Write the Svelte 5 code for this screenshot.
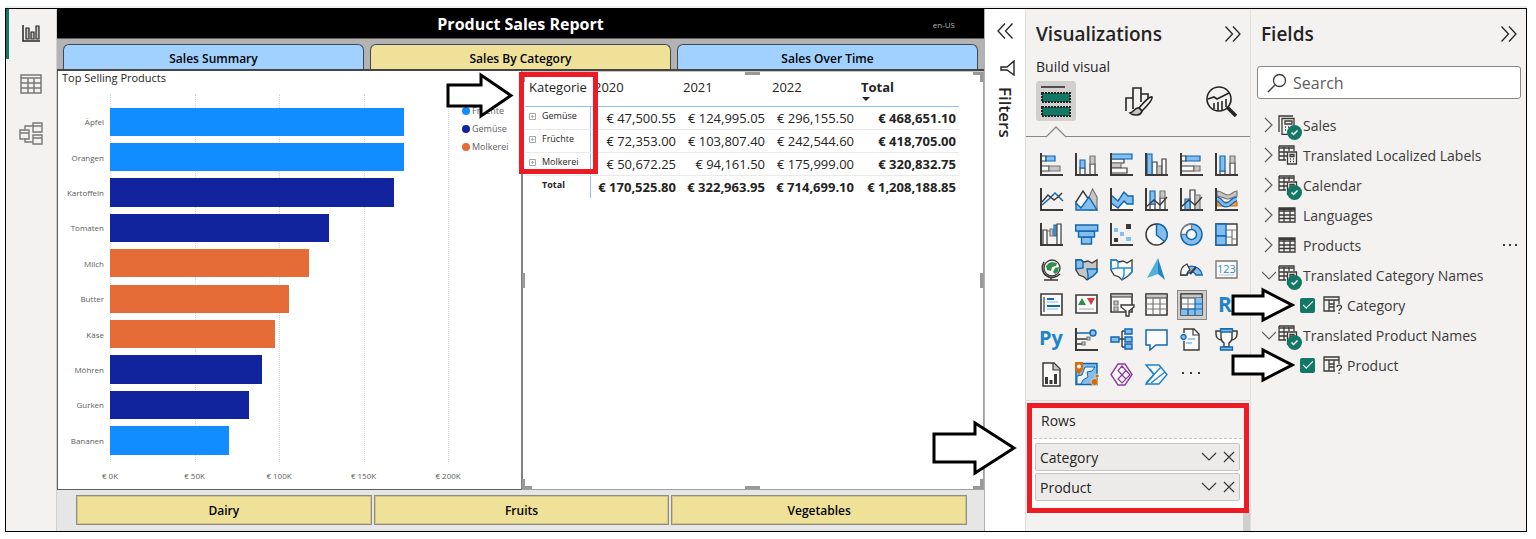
<script>
  const DARK = '#3b3a39';
  const BLUE = '#1167b1';
  const SKY = '#83beec';
  const WHITE = '#fafafa';
  const GREY = '#c8c6c4';
  const MID = '#797775';
  const ORANGE = '#d86c0a';
  const GREEN = '#309048';
  const PURPLE = '#8d3a9c';

  const R = (x, y, w, h) => `M${x} ${y}h${w}v${h}h${-w}z`;
  const axis = ['M1 0V22H23', 'none', DARK, 2];

  // Every shape is [path, fill, stroke, stroke width]; text is [string, x, y, size].
  const visuals = [
    { name: 'Stacked bar chart', shapes: [[R(1, 3, 5, 5), WHITE, DARK], [R(1, 13, 8, 5), WHITE, DARK], [R(9, 13, 11, 5), GREY, MID], [R(6, 3, 9, 5), SKY, BLUE], axis] },
    { name: 'Stacked column chart', shapes: [[R(5, 15, 5, 7), WHITE, DARK], [R(5, 7, 5, 8), SKY, BLUE], [R(15, 11, 5, 11), WHITE, DARK], [R(15, 3, 5, 8), GREY, MID], axis] },
    { name: 'Clustered bar chart', shapes: [[R(1, 6, 13, 4), WHITE, DARK], [R(1, 10, 10, 5), GREY, MID], [R(1, 15, 16, 5), WHITE, DARK], [R(1, 1, 21, 5), SKY, BLUE], axis] },
    { name: 'Clustered column chart', shapes: [[R(7, 9, 5, 13), WHITE, DARK], [R(12, 13, 5, 9), GREY, MID], [R(17, 6, 4, 16), WHITE, DARK], [R(2, 1, 5, 21), SKY, BLUE], axis] },
    { name: '100% stacked bar chart', shapes: [[R(1, 3, 5, 5), WHITE, DARK], [R(1, 13, 13, 5), WHITE, DARK], [R(14, 13, 6, 5), GREY, MID], [R(6, 3, 14, 5), SKY, BLUE], axis] },
    { name: '100% stacked column chart', shapes: [[R(5, 18, 5, 4), WHITE, DARK], [R(5, 3, 5, 15), SKY, BLUE], [R(15, 10, 5, 12), WHITE, DARK], [R(15, 3, 5, 7), GREY, MID], axis] },
    { name: 'Line chart', shapes: [['M2 17L9 11L15 5L19 9L23 13', 'none', BLUE, 1.5], ['M2 14L8 7L14 12L18 9L22 5', 'none', DARK, 1.5], axis] },
    { name: 'Area chart', shapes: [['M12 14L17.5 1L22 9V22H14z', GREY, MID], ['M1 14L8 3L14 12L7 21L1 16z', WHITE, DARK, 1.4], ['M1 15L6 20L14 9L22 22H1z', SKY, BLUE, 1.4]] },
    { name: 'Stacked area chart', shapes: [['M1 15L8 20L14 13L17 16H23V21H1z', WHITE, 'none'], ['M1 7L8 13L14 4L18 8H23V16H17L14 13L8 20L1 15z', SKY, BLUE, 1.4], axis] },
    { name: 'Line and stacked column chart', shapes: [[R(5, 16, 5, 6), WHITE, DARK], [R(5, 3, 5, 13), SKY, BLUE], [R(15, 10, 5, 12), WHITE, DARK], [R(15, 3, 5, 7), GREY, MID], ['M1 19L9 12L15 17L22 9', 'none', DARK, 1.4], axis] },
    { name: 'Line and clustered column chart', shapes: [[R(10, 2, 5, 20), WHITE, DARK], [R(15, 7, 5, 15), GREY, MID], [R(5, 11, 5, 11), SKY, BLUE], ['M1 19L9 12L15 17L22 9', 'none', DARK, 1.4], axis] },
    { name: 'Ribbon chart', shapes: [[R(2, 14, 20, 4), '#f0a04b', ORANGE], ['M2 3C7 3 9 7 13 7S18 3 22 3V8C18 8 17 11 13 11S7 8 2 8z', GREY, MID], ['M2 11C6 11 6 17 11 17S17 11 22 11', 'none', BLUE, 5], ['M2 11C6 11 6 17 11 17S17 11 22 11', 'none', SKY, 2.5], axis] },
    { name: 'Waterfall chart', shapes: [[R(3, 7, 4, 15), WHITE, DARK], ['M7 8H10V6H13V13H10V8', GREY, MID], [R(14, 2, 2, 11), SKY, BLUE], [R(17, 1, 4, 21), WHITE, DARK], axis] },
    { name: 'Funnel', shapes: [[R(6.5, 14, 10, 7), SKY, BLUE, 1.4], [R(3.5, 8, 16, 6), SKY, BLUE, 1.4], [R(0.7, 2, 22, 6), SKY, BLUE, 1.4]] },
    { name: 'Scatter chart', shapes: [[R(4, 5, 4, 4), SKY, 'none'], [R(16, 1, 5, 5), DARK, 'none'], [R(10, 9, 4, 4), SKY, 'none'], [R(4, 15, 4, 4), DARK, 'none'], [R(16, 14, 5, 4), SKY, 'none'], axis] },
    { name: 'Pie chart', shapes: [['M11.500 1a10.500 10.500 0 1 0 0 21a10.500 10.500 0 1 0 0-21z', WHITE, DARK, 1.5], ['M11.500 1a10.500 10.500 0 0 1 8 17.500L11.500 12z', SKY, BLUE, 1.5]] },
    { name: 'Donut chart', shapes: [['M11.500 1a10.500 10.500 0 1 0 0 21a10.500 10.500 0 1 0 0-21z', SKY, BLUE, 1.5], ['M11.500 1A10.500 10.500 0 0 0 1 11.500H6.500A5 5 0 0 1 11.500 6.500z', WHITE, MID, 1.3], ['M11.500 6.500a5 5 0 1 0 0 10a5 5 0 1 0 0-10z', WHITE, BLUE, 1.5]] },
    { name: 'Treemap', shapes: [[R(1, 1, 21, 21), WHITE, DARK, 1.4], ['M11 7H22M17 7V22M11 14H17M17 16H22', 'none', MID, 1.2], [R(1, 1, 10, 12), SKY, BLUE, 1.4], [R(1, 13, 10, 9), SKY, BLUE, 1.4]] },
    { name: 'Map', shapes: [['M12 2a8 8 0 1 0 0 16a8 8 0 1 0 0-16z', WHITE, DARK, 1.3], ['M12 4l5 1l-1 3l-4 1l-1 4l-4-1l-1-4l3-3zM15 10l4-1l-1 5l-3 2l-2-2z', GREEN, 'none'], ['M4 4C1 9 2 15 7 18C11 21 17 19 20 16M11 19V22M4 22H18', 'none', DARK, 1.6]] },
    { name: 'Filled map', shapes: [['M1 2H6L9 4L13 3L17 5L22 2V14L18 18L12 22L9 19L4 17L1 12z', GREY, DARK, 1.3], ['M1 2H6L8 4V10L1 11zM12 11H22V14L18 18L13 21V17z', SKY, BLUE, 1.4]] },
    { name: 'Shape map', shapes: [['M1 2H6L9 4L13 3L17 5L22 2V14L18 18L12 22L9 19L4 17L1 12z', WHITE, DARK, 1.3], ['M1 2H6L8 4V10L1 11zM8 10H22M14 10V17L12 22M22 10V14L18 18', 'none', '#1e90d8', 1.4]] },
    { name: 'Azure map', shapes: [['M13 0L2 20L13 16z', '#4fb0dc', 'none'], ['M13 0L20 22L13 16z', '#2187c4', 'none']] },
    { name: 'Gauge', shapes: [['M0.700 17A11 11 0 0 1 22.300 17H16A5 5 0 0 0 7 17z', SKY, BLUE, 1.3], ['M0.700 17A11 11 0 0 1 7 6L10 12A5 5 0 0 0 7 17z', WHITE, DARK, 1.3], ['M10 16L16 9', 'none', DARK, 2.2]] },
    { name: 'Card', shapes: [[R(1, 3, 21, 17), WHITE, MID, 1.4], ['M4 17H19', 'none', GREY, 1]], text: ['123', 2, 15, 11], color: '#2f8fd0', weight: 400 },
    { name: 'Multi-row card', shapes: [[R(1, 1, 21, 21), WHITE, DARK, 1.6], ['M4 4V19', 'none', DARK, 1.2], ['M7 6H14M7 13H20', 'none', BLUE, 2], ['M7 9H18M7 16H18', 'none', SKY, 1]] },
    { name: 'KPI', shapes: [[R(1, 2, 21, 18), WHITE, DARK, 1.6], ['M7 5L11 12H3z', GREEN, 'none'], ['M12 5H20L16 12z', '#d8383a', 'none'], ['M4 16H19', 'none', GREY, 1.5]] },
    { name: 'Slicer', shapes: [[R(1, 1, 21, 18), WHITE, DARK, 1.6], [R(1, 1, 21, 3), GREY, DARK, 1], [R(4, 8, 4, 4), GREY, MID], [R(4, 14, 4, 4), GREY, MID], ['M11 12H24V14L19 18V23H16V18L11 14z', WHITE, DARK, 1.4]] },
    { name: 'Table', shapes: [[R(1, 1, 21, 21), WHITE, DARK, 1.6], [R(1, 1, 21, 4), GREY, DARK, 1], ['M8 5V22M15 5V22M1 11H22M1 16H22', 'none', MID, 1.2]] },
    { name: 'Matrix', selected: true, shapes: [[R(1, 1, 21, 21), WHITE, DARK, 1.6], [R(1, 1, 21, 4), GREY, DARK, 1], ['M15 5H22V22H1V16H15z', SKY, 'none'], ['M8 5V22M1 11H15M1 16H15', 'none', MID, 1], ['M15 5V22M15 11H22M1 16H22M8 16V22', 'none', BLUE, 1.2]] },
    { name: 'R script visual', shapes: [], text: ['R', 3, 19, 21], color: '#2284c8', weight: 700 },
    { name: 'Python visual', shapes: [], text: ['Py', -1, 17, 20], color: '#2284c8', weight: 700 },
    { name: 'Key influencers', shapes: [['M1 5H16', 'none', BLUE, 1.5], ['M1 11H12M1 16H7', 'none', DARK, 1.3], [R(12, 9, 3, 3), GREY, MID], [R(7, 14, 3, 3), GREY, MID], ['M18 2a3 3 0 1 0 0 6a3 3 0 1 0 0-6z', SKY, BLUE, 1.4], axis] },
    { name: 'Decomposition tree', shapes: [['M8 11H15M12 3V19M12 3H15M12 19H15', 'none', DARK, 1.4], [R(1, 9, 8, 5), SKY, BLUE, 1.4], [R(15, 1, 7, 5), SKY, BLUE, 1.4], [R(15, 9, 7, 5), SKY, BLUE, 1.4], [R(15, 16, 7, 5), SKY, BLUE, 1.4]] },
    { name: 'Q&A', shapes: [['M1 2H22V17H11L5 22V17H1z', WHITE, BLUE, 1.5]] },
    { name: 'Smart narrative', shapes: [['M4 5V1H14L19 6V22H4V13', WHITE, DARK, 1.4], ['M13 1V7H19', 'none', DARK, 1.2], ['M8 11H15M6 15H12', 'none', SKY, 1.5], ['M3.500 6.500a2.500 2.500 0 1 0 .01 0z', SKY, BLUE, 1.4]] },
    { name: 'Goals', shapes: [['M6 3H1V6C1 10 4 12 7 12M17 3H22V6C22 10 19 12 16 12', 'none', DARK, 1.5], ['M6 1H17V10C17 13 14 15 14 15V19H9V15C9 15 6 13 6 10z', WHITE, DARK, 1.4], [R(5.5, 1, 12, 3), SKY, BLUE, 1.3], [R(5.5, 19, 12, 3), SKY, BLUE, 1.3]] },
    { name: 'Paginated report', shapes: [['M3 0H14L20 6V23H3z', WHITE, DARK, 1.5], ['M13 0V7H20', GREY, DARK, 1.2], [R(5, 14, 3, 7), DARK, 'none'], [R(9.5, 17, 3, 4), DARK, 'none'], [R(14, 11, 3, 10), DARK, 'none']] },
    { name: 'ArcGIS map', shapes: [[R(1, 0.5, 21, 21), SKY, BLUE, 1.5], ['M10 4H20L17 8L12 9L13 14L8 17L6 21H2V13L7 12z', '#f3f2f1', BLUE, 1], ['M14 10L20 8V12L15 15L13 20L9 21L10 18L14 15z', SKY, 'none'], ['M0-1H8V6L4 12L0 6z', ORANGE, 'none'], ['M4 1.500a2 2 0 1 0 .01 0z', WHITE, 'none'], ['M19.500 15.500a3.500 3.500 0 1 0 .01 0zM22 11a2 2 0 1 0 .01 0z', ORANGE, WHITE, 0.6]] },
    { name: 'Power Apps', shapes: [['M8 1H15L22 11.500L15 22H8L1 11.500z', WHITE, PURPLE, 1.4], ['M12 3L16 7.500L12 12L8 7.500zM12 12L16 16L12 20L8 16zM16 7.500L20 12L16 16L12 12zM8 7.500L12 12L8 16', 'none', PURPLE, 1.2]] },
    { name: 'Power Automate', shapes: [['M1 2H14L22 11.500L14 21H1L9 11.500z', WHITE, '#1a82cc', 1.4], ['M1 20L16 4M6 20L20 9M5 6L9 11.500', 'none', '#1a82cc', 1.3]] },
    { name: 'Get more visuals', shapes: [[R(2, 9, 2, 2) + R(10, 9, 2, 2) + R(18, 9, 2, 2), DARK, 'none']] },
  ];

  const bars = [
    { label: 'Äpfel', value: 174.2, kind: 'fruit' },
    { label: 'Orangen', value: 174.1, kind: 'fruit' },
    { label: 'Kartoffeln', value: 168, kind: 'veg' },
    { label: 'Tomaten', value: 129.8, kind: 'veg' },
    { label: 'Milch', value: 117.8, kind: 'dairy' },
    { label: 'Butter', value: 106, kind: 'dairy' },
    { label: 'Käse', value: 97.8, kind: 'dairy' },
    { label: 'Möhren', value: 89.8, kind: 'veg' },
    { label: 'Gurken', value: 82, kind: 'veg' },
    { label: 'Bananen', value: 70.5, kind: 'fruit' },
  ];
  const axisMax = 204.7;
  const ticks = [0, 50, 100, 150, 200];
  const percent = (v) => `${(v / axisMax) * 100}%`;

  const legend = [
    ['Früchte', 'fruit'],
    ['Gemüse', 'veg'],
    ['Molkerei', 'dairy'],
  ];

  const rows = [
    ['Gemüse', '€ 47,500.55', '€ 124,995.05', '€ 296,155.50', '€ 468,651.10'],
    ['Früchte', '€ 72,353.00', '€ 103,807.40', '€ 242,544.60', '€ 418,705.00'],
    ['Molkerei', '€ 50,672.25', '€ 94,161.50', '€ 175,999.00', '€ 320,832.75'],
  ];
  const totals = ['€ 170,525.80', '€ 322,963.95', '€ 714,699.10', '€ 1,208,188.85'];

  const tables = [
    { name: 'Sales', icon: 'measure', used: true },
    { name: 'Translated Localized Labels', icon: 'mixed' },
    { name: 'Calendar', icon: 'mixed', used: true },
    { name: 'Languages', icon: 'table' },
    { name: 'Products', icon: 'table', more: true },
    { name: 'Translated Category Names', icon: 'mixed', used: true, field: 'Category' },
    { name: 'Translated Product Names', icon: 'mixed', used: true, field: 'Product' },
  ];

  let tab = $state('Sales By Category');
  let query = $state('');
</script>

{#snippet arrow(w, h, top, head)}
  <svg width={w} height={h} viewBox="0 0 {w} {h}" aria-hidden="true">
    <path
      d="M2 {top}H{head}V3L{w - 3} {h / 2}L{head} {h - 3}V{h - top}H2z"
      fill="#fff" stroke="#000" stroke-width="3" />
  </svg>
{/snippet}

{#snippet chevrons(d)}
  <svg width="16" height="16" viewBox="0 0 16 16" fill="none" stroke="#252423" stroke-width="1.3" aria-hidden="true"><path {d} /></svg>
{/snippet}

<div class="page">
  <div class="frame">
    <nav class="rail" aria-label="Views">
      <button class="active" aria-label="Report view">
        <svg width="20" height="20" viewBox="0 0 20 20" fill="none" stroke="#252423" stroke-width="1.5"><path d="M2 1V17H19" /><path d="M5 4h3v11h-3zM10 8h3v7h-3zM15 2h3v13h-3z" fill="#c8c6c4" stroke-width="1.200" /></svg>
      </button>
      <button aria-label="Data view">
        <svg width="22" height="22" viewBox="0 0 22 22" fill="none" stroke="#7a7876" stroke-width="1.5"><path d="M1 2h20v18h-20zM1 5H21M1 10H21M1 15H21M8 5V20M14 5V20" /></svg>
      </button>
      <button aria-label="Model view">
        <svg width="24" height="24" viewBox="0 0 24 24" fill="none" stroke="#7a7876" stroke-width="1.4"><path d="M1 8h9v9h-9zM1 11H10M14 1h9v9h-9zM14 4H23M14 13h9v9h-9zM14 16H23M6 8V4H14M6 17V20H14" /></svg>
      </button>
    </nav>

    <main class="report">
      <header>
        <h1>Product Sales Report</h1>
        <span class="locale">en-US</span>
      </header>
      <div class="tabs">
        {#each ['Sales Summary', 'Sales By Category', 'Sales Over Time'] as name}
          <button class:current={tab === name} onclick={() => (tab = name)}>{name}</button>
        {/each}
      </div>

      <div class="canvas">
        <section class="chart">
          <h2>Top Selling Products</h2>
          <div class="plot">
            <div class="labels">
              {#each bars as bar}<span>{bar.label}</span>{/each}
            </div>
            <div class="bars">
              {#each ticks as t}<i class="grid" style:left={percent(t)}></i>{/each}
              {#each bars as bar}
                <div class="track"><div class="bar {bar.kind}" style:width={percent(bar.value)}></div></div>
              {/each}
            </div>
            <ul class="legend">
              {#each legend as [name, kind]}<li><i class={kind}></i>{name}</li>{/each}
            </ul>
            <div class="axis">
              {#each ticks as t}<span style:left={percent(t)}>€ {t}K</span>{/each}
            </div>
          </div>
        </section>

        <section class="matrix">
          <table>
            <thead>
              <tr>
                <th>Kategorie</th><th>2020</th><th>2021</th><th>2022</th>
                <th class="sum">Total<i class="sort"></i></th>
              </tr>
            </thead>
            <tbody>
              {#each rows as [name, ...cells]}
                <tr>
                  <th>
                    <button class="expand" aria-label="Expand {name}"><svg width="7" height="7" viewBox="0 0 7 7" fill="none" stroke="#a6a6a6"><path d="M.5 .5h6v6h-6zM2 3.500H5M3.500 2V5" /></svg></button>{name}
                  </th>
                  {#each cells as cell, i}<td class:sum={i === 3}>{cell}</td>{/each}
                </tr>
              {/each}
            </tbody>
            <tfoot>
              <tr><th>Total</th>{#each totals as cell}<td>{cell}</td>{/each}</tr>
            </tfoot>
          </table>
          <i class="handle tl"></i><i class="handle tr"></i><i class="handle bl"></i><i class="handle br"></i>
          <i class="handle t"></i><i class="handle b"></i><i class="handle l"></i><i class="handle r"></i>
          <div class="mark mark-category"></div>
          <div class="arrow arrow-category">{@render arrow(68, 47, 13, 35)}</div>
        </section>
      </div>

      <footer>
        <button>Dairy</button><button>Fruits</button><button>Vegetables</button>
      </footer>
    </main>

    <aside class="filters">
      <button aria-label="Expand filters">{@render chevrons('M8 0.500L1 8L8 15.500M15.500 0.500L8.500 8L15.500 15.500')}</button>
      <svg width="16" height="16" viewBox="0 0 16 16" fill="none" stroke="#252423" stroke-width="1.4" aria-hidden="true"><path d="M14 1V15L7 10H1V7H7z" /></svg>
      <h2>Filters</h2>
    </aside>

    <aside class="viz">
      <div class="pane-title">
        <h2>Visualizations</h2>
        <button aria-label="Collapse visualizations">{@render chevrons('M0.500 0.500L7.500 8L0.500 15.500M8 0.500L15 8L8 15.500')}</button>
      </div>
      <h3>Build visual</h3>
      <div class="modes">
        <button class="on" aria-label="Build visual">
          <svg width="32" height="34" viewBox="0 0 32 34"><path d="M1 3H25" stroke="#252423" stroke-width="1.500" /><path d="M2 9h28v9h-28zM2 23h28v9h-28z" fill="#117865" stroke="#252423" stroke-width="2" stroke-dasharray="2 1" /></svg>
        </button>
        <button aria-label="Format visual">
          <svg width="30" height="32" viewBox="0 0 30 32" fill="none" stroke="#252423" stroke-width="1.6"><path d="M2 26V13H9M9 24V3H17V17M17 9H24V14" /><path d="M28 12C26 11 20 17 15 23L18 26C23 21 29 14 28 12z" fill="#f3f2f1" /><path d="M15 23C11 22 10 27 6 28C9 31 17 31 18 26z" fill="#c8c6c4" /></svg>
        </button>
        <button aria-label="Analytics">
          <svg width="32" height="32" viewBox="0 0 32 32" fill="none" stroke="#252423" stroke-width="1.6"><circle cx="14" cy="14" r="12" /><path d="M3 14L9 12L12 14L24 8M9 18V24M13 17V26M17 16V25M21 14V22" /><path d="M22 22L31 31" stroke-width="3.500" /></svg>
        </button>
      </div>
      <svg class="notch" viewBox="0 0 20 12" width="20" height="12" aria-hidden="true"><path d="M0 11L10 1L20 11" fill="#f3f2f1" stroke="#8a8886" stroke-width="1.300" /></svg>
      <div class="gallery">
        {#each visuals as v}
          <button class:selected={v.selected} aria-label={v.name}>
            <svg width="24" height="24" viewBox="0 0 24 24">
              {#each v.shapes as [d, fill, stroke, width]}
                <path {d} {fill} {stroke} stroke-width={width ?? 1.2} />
              {/each}
              {#if v.text}
                <text x={v.text[1]} y={v.text[2]} font-size={v.text[3]} fill={v.color} font-weight={v.weight}>{v.text[0]}</text>
              {/if}
            </svg>
          </button>
        {/each}
      </div>
      <div class="well">
        <h3>Rows</h3>
        <div class="slots">
          {#each ['Category', 'Product'] as field}
            <div class="slot">
              <span>{field}</span>
              <button aria-label="{field} options"><svg width="16" height="10" viewBox="0 0 16 10" fill="none" stroke="#3b3a39" stroke-width="1.200"><path d="M1 1L8 8L15 1" /></svg></button>
              <button aria-label="Remove {field}"><svg width="12" height="12" viewBox="0 0 12 12" fill="none" stroke="#3b3a39" stroke-width="1.200"><path d="M1 1L11 11M11 1L1 11" /></svg></button>
            </div>
          {/each}
        </div>
        <div class="mark mark-rows"></div>
        <div class="arrow arrow-rows">{@render arrow(85, 56, 14, 43)}</div>
      </div>
      <i class="scroll"></i>
    </aside>

    <aside class="fields">
      <div class="pane-title">
        <h2>Fields</h2>
        <button aria-label="Collapse fields">{@render chevrons('M0.500 0.500L7.500 8L0.500 15.500M8 0.500L15 8L8 15.500')}</button>
      </div>
      <label class="search">
        <svg width="20" height="20" viewBox="0 0 20 20" fill="none" stroke="#3b3a39" stroke-width="1.300" aria-hidden="true"><circle cx="12.500" cy="7.500" r="6" /><path d="M8 12L1 19" /></svg>
        <input type="text" placeholder="Search" aria-label="Search" bind:value={query} />
      </label>
      <ul class="tree">
        {#each tables as t}
          <li>
            <button class="toggle" aria-label="Toggle {t.name}">
              <svg width="14" height="16" viewBox="0 0 14 16" fill="none" stroke="#605e5c" stroke-width="1.200">
                <path d={t.field ? 'M0 5L7 12L14 5' : 'M3 1L10 8L3 15'} />
              </svg>
            </button>
            <span class="glyph">
              <svg width="20" height="20" viewBox="0 0 20 20" fill="none" stroke="#3b3a39" stroke-width="1.300" aria-hidden="true">
                {#if t.icon === 'table'}
                  <path d="M1 3h16v14h-16zM1 6H17M1 10H17M1 13.500H17M6 5V17M12 5V17" /><path d="M1 4H17" stroke-width="2" />
                {:else if t.icon === 'mixed'}
                  <path d="M1 1h15v5M1 3H16M6 2V15M11 2V6M1 1V15H8M1 7H9M1 11H9" /><path d="M9.500 7h9v12h-9z" fill="#f3f2f1" /><path d="M12 9.500h4v2h-4zM12 14H13M15 14H16M12 16.500H13M15 16.500H16" />
                {:else}
                  <path d="M1 17V1H15" /><path d="M4 3.500h12v16h-12z" fill="#f3f2f1" /><path d="M7 6h7v3h-7zM7 12H8M10 12H11M13 12H14M7 15H8M10 15H11M13 15H14" />
                {/if}
              </svg>
              {#if t.used}
                <svg class="used" width="15" height="15" viewBox="0 0 15 15" aria-hidden="true"><circle cx="7.500" cy="7.500" r="7.500" fill="#117865" /><path d="M4.500 7.500L6.500 9.500L10.500 5.500" fill="none" stroke="#fff" stroke-width="1.500" /></svg>
              {/if}
            </span>
            <span>{t.name}</span>
            {#if t.more}<button class="more" aria-label="More options"><svg width="14" height="2" viewBox="0 0 14 2" fill="#3b3a39"><path d="M0 0h2v2h-2zM6 0h2v2h-2zM12 0h2v2h-2z" /></svg></button>{/if}
          </li>
          {#if t.field}
            <li class="child">
              <div class="arrow arrow-field">{@render arrow(64, 36, 9, 32)}</div>
              <label>
                <input type="checkbox" checked />
                <svg width="20" height="20" viewBox="0 0 20 20" fill="none" stroke="#3b3a39" stroke-width="1.300" aria-hidden="true"><path d="M16 9V2H1V16H12M1 5H16M6 5V16M11 5V16M6 9H11M6 12H11" /><path d="M14 12C14 9.500 18.500 9.500 18.500 12C18.500 14 16 13.500 16 16M16 17.500V19" /></svg>
                <span>{t.field}</span>
              </label>
            </li>
          {/if}
        {/each}
      </ul>
    </aside>
  </div>
</div>

<style>
  :global(body) { margin: 0; background: #fff; }
  .page, .page * { box-sizing: border-box; }
  .page {
    display: flex;
    min-height: 100vh;
    padding: 8px 9px 7px 5px;
    font-family: "Open Sans", "Noto Sans", sans-serif;
    color: #252423;
  }
  h1, h2, h3, ul { margin: 0; padding: 0; }
  h2 { font-weight: 600; }
  ul { list-style: none; }
  button { border: 0; padding: 0; background: none; font: inherit; color: inherit; }
  svg { display: block; }
  .frame { display: flex; flex: 1; min-width: 0; border: 1px solid #000; box-shadow: 0 -2px #eee; }

  .rail { width: 51px; flex: none; background: #f3f2f1; border-right: 1px solid #d0d0d0; }
  .rail button { display: grid; place-items: center; width: 100%; height: 50px; padding-right: 3px; border-left: 3px solid transparent; }
  .rail .active { border-color: #117865; }

  .report { display: flex; flex-direction: column; flex: 1; min-width: 0; border-right: 1px solid #b0b0b0; }
  header { position: relative; height: 30px; background: #000; border-bottom: 1px solid #605e5c; color: #fff; text-align: center; }
  h1 { font-size: 16px; line-height: 30px; font-weight: 700; }
  .locale { position: absolute; right: 29px; top: 10px; font-size: 8px; line-height: 12px; color: #b3b3b3; }
  .tabs { display: flex; gap: 6px; height: 32px; padding: 5px 6px 0; background: #b3b3b3; border-bottom: 2px solid #454545; }
  .tabs button { flex: 1; border: 1px solid #3c4a58; border-bottom: 0; border-radius: 6px 6px 0 0; background: #a0d1ff; color: #000; font-size: 12px; line-height: 28px; font-weight: 600; }
  .tabs .current { background: #f0e199; }

  .canvas { display: flex; flex: 1; background: #fff; border-left: 1px solid #605e5c; }
  .chart { display: flex; flex-direction: column; flex: 1; min-width: 0; border-bottom: 1px solid #605e5c; }
  .chart h2 { height: 23px; padding-left: 4px; font-size: 11px; line-height: 14px; font-weight: 400; }
  .plot { display: grid; grid-template: 1fr 27px / 52px 1fr 65px; flex: 1; color: #605e5c; }
  .labels, .bars { display: flex; flex-direction: column; padding: 10px 0 4px; }
  .labels span { display: flex; align-items: center; justify-content: flex-end; flex: 1; padding-right: 6px; font-size: 8px; }
  .bars { position: relative; }
  .track { position: relative; display: flex; align-items: center; flex: 1; }
  .bar { height: 80%; }
  .fruit { background: #118dff; }
  .veg { background: #12239e; }
  .dairy { background: #e66c37; }
  .grid { position: absolute; top: 0; bottom: 0; border-left: 1px dotted #d8d8d8; }
  .legend { padding: 8px 0 0 6px; font-size: 9px; line-height: 18px; }
  .legend li { display: flex; align-items: center; gap: 2px; }
  .legend i { width: 8px; height: 8px; border-radius: 50%; }
  .axis { position: relative; grid-column: 2; }
  .axis span { position: absolute; top: 8px; transform: translateX(-50%); font-size: 8px; line-height: 12px; white-space: nowrap; }

  .matrix { position: relative; flex: 0 0 50%; min-width: 0; padding-left: 2px; border: 1px solid #a0a0a0; border-top-color: #c8c6c4; border-left: 2px solid #808080; }
  table { border-collapse: collapse; table-layout: fixed; width: 434px; font-size: 13px; }
  th, td { height: 23px; padding: 0 3px; font-weight: 400; line-height: 16px; white-space: nowrap; }
  td { text-align: right; border-bottom: 1px solid #eaeaea; }
  th { text-align: left; border-bottom: 1px solid #eaeaea; }
  th:first-child { width: 65px; }
  th:last-child { width: 102px; }
  thead th { position: relative; height: 34px; padding: 0 4px 4px; border-bottom: 1px solid #8ec0f0; }
  tbody th, tfoot th { padding: 0 0 4px 4px; border-right: 1px solid #8ec0f0; font-size: 9px; }
  tfoot th, tfoot td { border-bottom: 0; font-weight: 700; }
  tfoot th { padding-left: 17px; }
  .page .sum { font-weight: 700; }
  .sort { position: absolute; left: 5px; bottom: 5px; border: 4px solid transparent; border-top-color: #252423; border-bottom: 0; }
  .expand { display: inline-block; margin-right: 6px; vertical-align: middle; }
  .handle { position: absolute; width: 10px; height: 10px; border: 0 solid #999; }
  .tl { left: -1px; top: 0; border-width: 3px 0 0 3px; }
  .tr { right: 0; top: 0; border-width: 3px 3px 0 0; }
  .bl { left: -1px; bottom: 0; border-width: 0 0 3px 3px; }
  .br { right: 0; bottom: 0; border-width: 0 3px 3px 0; }
  .t, .b { left: calc(50% - 8px); width: 15px; height: 3px; background: #999; }
  .t { top: 0; }
  .b { bottom: 0; }
  .l, .r { top: calc(50% - 8px); width: 3px; height: 15px; background: #999; }
  .l { left: -1px; }
  .r { right: 0; }

  .mark { position: absolute; border: 5px solid #ed1c24; pointer-events: none; }
  .mark-category { left: -4px; top: 0; width: 79px; height: 102px; }
  .mark-rows { left: 1px; top: 2px; right: 1px; height: 110px; }
  .arrow { position: absolute; z-index: 2; pointer-events: none; }
  .arrow-category { left: -77px; top: 0; }
  .arrow-rows { left: -94px; top: 19px; }
  .arrow-field { left: -20px; top: -3px; }

  footer { display: flex; gap: 2px; height: 41px; padding: 5px 17px 6px 19px; background: #e6e6e6; }
  footer button { flex: 1; border: 1px solid #928d7c; box-shadow: inset 0 0 0 1px #cfc48c; background: #f0e199; color: #000; font-size: 12px; font-weight: 600; }

  .filters { display: flex; flex-direction: column; align-items: center; width: 40px; flex: none; padding-top: 14px; background: #fff; }
  .filters > svg { margin: 21px 0 11px 6px; }
  .filters h2 { writing-mode: vertical-rl; font-size: 17px; line-height: 20px; }

  .viz { position: relative; display: flex; flex-direction: column; width: 226px; flex: none; background: #f3f2f1; border: 0 solid #dedddc; border-width: 0 1px; }
  .pane-title { display: flex; align-items: center; justify-content: space-between; height: 50px; padding: 0 9px 0 10px; }
  .pane-title h2 { font-size: 19px; line-height: 24px; }
  .viz > h3 { padding-left: 10px; font-size: 14px; line-height: 16px; font-weight: 400; }
  .modes { display: flex; justify-content: space-between; padding: 6px 9px 5px 10px; }
  .modes button { display: grid; place-items: center; width: 40px; height: 40px; border-radius: 3px; }
  .modes .on { background: #d2d0ce; }
  .notch { position: relative; z-index: 1; margin: 0 0 -2px 20px; }
  .gallery { display: grid; grid-template-columns: repeat(6, 24px); gap: 11px; padding: 16px 0 13px 14px; border: 1px solid #8a8886; border-width: 1px 0 0; }
  .gallery button { width: 24px; height: 24px; }
  .gallery svg { overflow: visible; }
  .gallery .selected { width: 30px; height: 30px; margin: -3px; padding: 2px; border: 1px solid #8a8886; background: #d2d0ce; }
  .well { position: relative; padding: 0 8px; border-top: 1px solid #dedddc; }
  .well h3 { padding-left: 7px; border-bottom: 1px dashed #c8c6c4; font-size: 14px; line-height: 40px; height: 38px; font-weight: 400; }
  .slots { display: grid; gap: 2px; margin: 0 -4px; padding: 4px 6px 8px 5px; background: #fff; }
  .slot { display: flex; align-items: center; gap: 6px; height: 28px; padding: 0 4px; border: 1px solid #c8c6c4; border-radius: 2px; background: #edebe9; font-size: 14px; }
  .slot span { flex: 1; }
  .scroll { align-self: flex-end; flex: 1; width: 7px; background: #d0cecc; }

  .fields { width: 275px; flex: none; background: #f3f2f1; }
  .search { display: flex; align-items: center; gap: 6px; height: 33px; margin: 7px 5px 11px 6px; padding: 0 9px; border: 1px solid #8a8886; border-radius: 3px; background: #fff; }
  .search input { flex: 1; min-width: 0; border: 0; outline: 0; padding: 0; background: none; font: 400 16px/24px "Open Sans", sans-serif; color: #252423; }
  .search input::placeholder { color: #605e5c; opacity: 1; }
  .tree li { position: relative; display: flex; align-items: center; height: 30px; padding: 0 9px 0 11px; font-size: 14px; color: #3b3a39; }
  .toggle { width: 14px; margin-right: 2px; }
  .glyph { position: relative; margin-right: 5px; }
  .used { position: absolute; right: -4px; bottom: -5px; }
  .more { margin-left: auto; }
  .tree .child { padding-left: 49px; }
  .child label { display: flex; align-items: center; }
  .child label svg { margin-right: 4px; }
  .child input { display: grid; place-items: center; appearance: none; width: 15px; height: 15px; margin: 0 8px 0 0; border-radius: 2px; background: #117865; }
  .child input:checked::before { content: ""; width: 9px; height: 4px; margin-bottom: 3px; border: solid #fff; border-width: 0 0 1px 1px; transform: rotate(-45deg); }
</style>
